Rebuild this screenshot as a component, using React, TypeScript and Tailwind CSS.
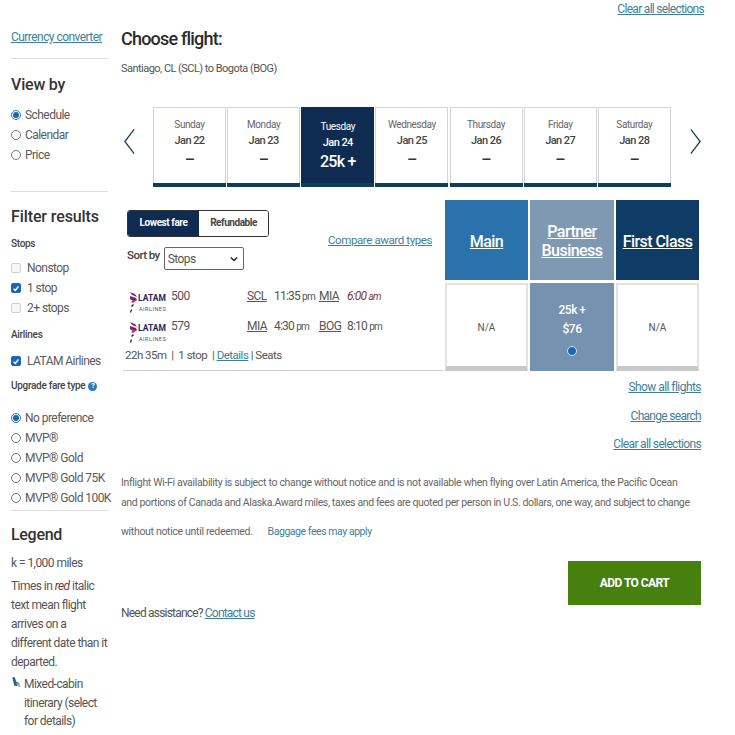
const days = [
  { name: 'Sunday', date: 'Jan 22' },
  { name: 'Monday', date: 'Jan 23' },
  { name: 'Tuesday', date: 'Jan 24', price: '25k +' },
  { name: 'Wednesday', date: 'Jan 25' },
  { name: 'Thursday', date: 'Jan 26' },
  { name: 'Friday', date: 'Jan 27' },
  { name: 'Saturday', date: 'Jan 28' },
];

function Radio({ label, checked }: { label: string; checked?: boolean }) {
  return (
    <div className="flex items-center h-5 gap-[4px] text-[12px] text-[#5a5a5a] whitespace-nowrap">
      <span className={`w-[10px] h-[10px] shrink-0 rounded-full border flex items-center justify-center bg-white ${checked ? 'border-[#2a7bc8]' : 'border-[#777]'}`}>
        {checked && <span className="w-[6px] h-[6px] rounded-full bg-[#1a66b8]" />}
      </span>
      {label}
    </div>
  );
}

function Check({ label, checked }: { label: string; checked?: boolean }) {
  return (
    <div className="flex items-center h-5 gap-[6px] text-[12px] text-[#5a5a5a] whitespace-nowrap">
      <span className={`w-[10px] h-[10px] shrink-0 rounded-[2px] border flex items-center justify-center ${checked ? 'bg-[#1a66b8] border-[#1a66b8]' : 'bg-[#f6f6f6] border-[#cfcfcf]'}`}>
        {checked && (
          <svg viewBox="0 0 10 10" className="w-[9px] h-[9px]" fill="none" stroke="#fff" strokeWidth="1.8">
            <path d="M2 5.2 4.2 7.5 8 2.5" />
          </svg>
        )}
      </span>
      {label}
    </div>
  );
}

function Latam() {
  return (
    <div className="w-[37px] h-[24px] flex shrink-0">
      <svg viewBox="0 0 8 24" className="w-[8px] h-[24px] shrink-0">
        <path d="M0 2 5 4 7 7 2 5Z" fill="#8a2a6e" />
        <path d="M0 6 6 8 7 10 3 11 0 9Z" fill="#6a2a7a" />
        <path d="M7 10 3 13 1 12 4 10Z" fill="#e0245e" />
        <path d="M3 14 4 15 2 17 1 16Z" fill="#2b1f5c" />
        <path d="M1 19 2 20 1 23 0 22Z" fill="#2b1f5c" />
      </svg>
      <div className="flex flex-col pt-[3px]">
        <span className="text-[8.5px] leading-[10px] font-bold text-[#2b1f5c] tracking-normal">LATAM</span>
        <span className="text-[5.5px] leading-[9px] mt-[2px] ml-[1px] tracking-[0.5px] text-[#555]">AIRLINES</span>
      </div>
    </div>
  );
}

function Time({ t, suffix }: { t: string; suffix: string }) {
  return <span className="tracking-[-0.8px]">{t} <span className="text-[10px]">{suffix}</span></span>;
}

function FlightRow({ num, from, dep, to, arr, red }: { num: string; from: string; dep: [string, string]; to: string; arr: [string, string]; red?: boolean }) {
  return (
    <div className="flex h-[30px] text-[12px] text-[#555] whitespace-nowrap">
      <div className="flex w-[126px] pl-[9px]">
        <div className="mt-[4px]"><Latam /></div>
        <span className="ml-[4px] mt-[1px]">{num}</span>
      </div>
      <span className="w-[27px] mt-[1px] underline">{from}</span>
      <span className="w-[45px] mt-[1px]"><Time t={dep[0]} suffix={dep[1]} /></span>
      <span className="w-[28px] mt-[1px] underline">{to}</span>
      <span className={`mt-[1px] ${red ? 'italic text-[#7a3b3b]' : ''}`}><Time t={arr[0]} suffix={arr[1]} /></span>
    </div>
  );
}

export default function App() {
  return (
    <div className="relative w-[735px] h-[735px] overflow-hidden bg-white font-['Roboto',sans-serif] text-[#555] tracking-[-0.55px]">
      <div className="flex justify-end pr-[31px] pt-px h-[16px] text-[12px] leading-[16px] tracking-[-0.7px]">
        <a className="text-[#3f7f9a] underline">Clear all selections</a>
      </div>

      <div className="flex pl-[11px]">
        <aside className="w-[97px] shrink-0">
          <a className="block mt-[13px] text-[12px] leading-[16px] text-[#3f7f9a] underline whitespace-nowrap">Currency converter</a>
          <hr className="mt-[13px] border-[#ddd]" />
          <h2 className="mt-[15px] text-[16px] leading-[22px] font-medium text-[#333] tracking-[-0.2px]">View by</h2>
          <div className="mt-[9px]">
            <Radio label="Schedule" checked />
            <Radio label="Calendar" />
            <Radio label="Price" />
          </div>
          <hr className="mt-[26px] border-[#ddd]" />
          <h2 className="mt-[14px] text-[16px] leading-[22px] font-medium text-[#333] tracking-[-0.1px]">Filter results</h2>
          <p className="mt-[9px] text-[10px] leading-[14px] font-medium text-[#444] tracking-[-0.3px]">Stops</p>
          <div className="mt-[7px]">
            <Check label="Nonstop" />
            <Check label="1 stop" checked />
            <Check label="2+ stops" />
          </div>
          <p className="mt-[10px] text-[10px] leading-[14px] font-medium text-[#444] tracking-[-0.3px]">Airlines</p>
          <div className="mt-[9px]">
            <Check label="LATAM Airlines" checked />
          </div>
          <p className="mt-[8px] flex items-center gap-[3px] text-[10px] leading-[14px] font-medium text-[#444] tracking-[-0.3px] whitespace-nowrap">
            Upgrade fare type
            <span className="w-[9px] h-[9px] rounded-full bg-[#2a7bb8] text-white text-[7px] leading-[9px] text-center font-bold">?</span>
          </p>
          <div className="mt-[15px]">
            <Radio label="No preference" checked />
            <Radio label="MVP®" />
            <Radio label="MVP® Gold" />
            <Radio label="MVP® Gold 75K" />
            <Radio label="MVP® Gold 100K" />
          </div>
          <hr className="mt-[2px] border-[#ddd]" />
          <h2 className="mt-[13px] text-[16px] leading-[22px] font-medium text-[#333] tracking-[-0.3px]">Legend</h2>
          <p className="mt-[9px] text-[12px] leading-[16px]">k = 1,000 miles</p>
          <p className="mt-[6px] text-[12px] leading-[19px]">
            Times in <span className="italic text-[#7a3b3b]">red</span> italic text mean flight arrives on a different date than it departed.
          </p>
          <div className="flex mt-[3px] text-[12px] leading-[18.5px]">
            <svg viewBox="0 0 12 13" className="w-[10px] h-[12px] mt-[1px] mr-[3px] shrink-0">
              <path d="M1.5 1 4.5 .6 6.5 6.5 9.5 7.5 10.5 11.5 4 11Z" fill="#2f6583" />
              <path d="M6 8 10 8.5 11.5 12 8.5 12Z" fill="#9db7c6" />
            </svg>
            <span>Mixed-cabin itinerary (select for details)</span>
          </div>
        </aside>

        <main className="w-[580px] ml-[13px]">
          <h1 className="mt-[9px] text-[18px] leading-[28px] font-medium text-[#2b2b2b] tracking-[-0.8px]">Choose flight:</h1>
          <p className="mt-[8px] text-[11px] leading-[16px] tracking-[-0.53px]">Santiago, CL (SCL) to Bogota (BOG)</p>

          <div className="flex items-start mt-[30px] h-[80px]">
            <svg viewBox="0 0 14 28" className="w-[13px] h-[27px] mt-[21px] ml-[2px] mr-[17px] shrink-0" fill="none" stroke="#1d3f5a" strokeWidth="1.4">
              <path d="M12 1 2 14 12 27" />
            </svg>
            <div className="flex gap-[1.15px]">
              {days.map(d => (
                <div
                  key={d.name}
                  className={`w-[73px] h-[80px] flex flex-col items-center box-border border-x border-t ${d.price ? 'bg-[#0e2c52] border-[#0e2c52] text-white' : 'bg-white border-[#d4d4d4]'}`}
                >
                  <span className={`text-[10px] leading-[14px] tracking-[-0.4px] ${d.price ? 'mt-[12px]' : 'mt-[10px] text-[#666]'}`}>{d.name}</span>
                  <span className={`text-[11px] leading-[16px] font-medium mt-px ${d.price ? '' : 'text-[#444]'}`}>{d.date}</span>
                  <span className={`font-medium ${d.price ? 'text-[16px] leading-[22px] tracking-[-0.8px]' : 'text-[16px] leading-[22px] text-[#333]'}`}>{d.price ?? '–'}</span>
                  <div className="mt-auto w-[73px] h-[4px] bg-[#0e3f5a]" />
                </div>
              ))}
            </div>
            <svg viewBox="0 0 14 28" className="w-[13px] h-[27px] mt-[21px] ml-[18px] shrink-0" fill="none" stroke="#1d3f5a" strokeWidth="1.4">
              <path d="M2 1 12 14 2 27" />
            </svg>
          </div>

          <div className="flex mt-[13px]">
            <div className="w-[324px] shrink-0">
              <div className="flex items-start">
                <div className="mt-[10px] ml-[6px] w-[142px] h-[27px] flex rounded-[3px] border border-[#333] overflow-hidden text-[10px] font-bold tracking-[-0.45px]">
                  <span className="w-[71px] pb-[2px] bg-[#0e2c52] text-white flex items-center justify-center">Lowest fare</span>
                  <span className="flex-1 pb-[2px] bg-white text-[#444] flex items-center justify-center">Refundable</span>
                </div>
                <a className="ml-[59px] mt-[32px] text-[11.5px] leading-[16px] tracking-[-0.4px] text-[#3f7f9a] underline whitespace-nowrap">Compare award types</a>
              </div>
              <div className="flex items-start ml-[6px] mt-[-1px]">
                <span className="mt-[1px] text-[11.5px] leading-[14px] font-medium text-[#444] whitespace-nowrap">Sort by</span>
                <div className="ml-[4px] w-[80px] h-[23px] rounded-[2px] border border-[#666] flex items-center justify-between pl-[3px] pr-[5px] text-[12px] text-[#555]">
                  Stops
                  <svg viewBox="0 0 10 6" className="w-[8px] h-[6px]" fill="none" stroke="#222" strokeWidth="1.8">
                    <path d="M1 1 5 5 9 1" />
                  </svg>
                </div>
              </div>
              <div className="mt-[16px]">
                <FlightRow num="500" from="SCL" dep={['11:35', 'pm']} to="MIA" arr={['6:00', 'am']} red />
                <FlightRow num="579" from="MIA" dep={['4:30', 'pm']} to="BOG" arr={['8:10', 'pm']} />
              </div>
              <div className="ml-[2px] mt-[1px] h-[16px] w-[320px] box-content pb-[7px] border-b border-[#ccc] text-[11.5px] leading-[16px] tracking-[-0.5px] whitespace-pre">
                <span className="ml-[2px]">22h 35m  |  1 stop  | </span><a className="text-[#3f7f9a] underline">Details</a> | Seats
              </div>
            </div>

            <div className="w-[254px] shrink-0">
              <div className="grid grid-cols-[83px_84px_83px] gap-x-[2px]">
                <div className="h-[80px] pt-[2px] bg-[#2a72ac] flex items-center justify-center text-white text-[16px] leading-[19px] font-medium underline">Main</div>
                <div className="h-[80px] pt-[2px] bg-[#7f99b3] flex items-center justify-center text-center text-white text-[16px] leading-[19px] font-medium underline">Partner<br />Business</div>
                <div className="h-[80px] pt-[2px] bg-[#0e3c64] flex items-center justify-center text-white text-[16px] leading-[19px] font-medium underline whitespace-nowrap">First Class</div>
                <div className="mt-[3px] h-[88px] pt-[3px] border-2 border-[#e2e2e2] border-b-[5px] border-b-[#c8c8c8] flex items-center justify-center text-[10px] text-[#555] tracking-normal">N/A</div>
                <div className="mt-[3px] h-[88px] bg-[#7592b0] flex flex-col items-center text-white text-[12px] font-medium leading-[19px]">
                  <span className="mt-[18px]">25k +</span>
                  <span>$76</span>
                  <span className="mt-[7px] w-[10px] h-[10px] rounded-full border border-[#cfe8ff] bg-[#1a66b8]" />
                </div>
                <div className="mt-[3px] h-[88px] pt-[3px] border-2 border-[#e2e2e2] border-b-[5px] border-b-[#c8c8c8] flex items-center justify-center text-[10px] text-[#555] tracking-normal">N/A</div>
              </div>
            </div>
          </div>

          <div className="w-[580px] flex flex-col items-end text-[12px] leading-[16px] text-[#3f7f9a]">
            <a className="mt-[8px] underline">Show all flights</a>
            <a className="mt-[13px] tracking-[-0.7px] underline">Change search</a>
            <a className="mt-[12px] tracking-[-0.65px] underline">Clear all selections</a>
          </div>

          <div className="mt-[21px] w-[580px] text-[10.5px] leading-[20px] text-[#666] tracking-[-0.32px]">
            <p className="whitespace-nowrap">Inflight Wi-Fi availability is subject to change without notice and is not available when flying over Latin America, the Pacific Ocean</p>
            <p className="whitespace-nowrap tracking-[-0.38px]">and portions of Canada and Alaska.Award miles, taxes and fees are quoted per person in U.S. dollars, one way, and subject to change</p>
            <p className="mt-[9px] whitespace-nowrap">without notice until redeemed.<span className="ml-[15px] text-[#3f7f9a] tracking-[-0.45px]">Baggage fees may apply</span></p>
          </div>

          <div className="flex justify-end mt-[19px]">
            <button className="w-[133px] h-[44px] bg-[#46800f] text-white text-[12px] font-bold">ADD TO CART</button>
          </div>
          <p className="text-[12px] leading-[16px] tracking-[-0.8px]">Need assistance? <a className="text-[#3f7f9a] underline">Contact us</a></p>
        </main>
      </div>
    </div>
  );
}
